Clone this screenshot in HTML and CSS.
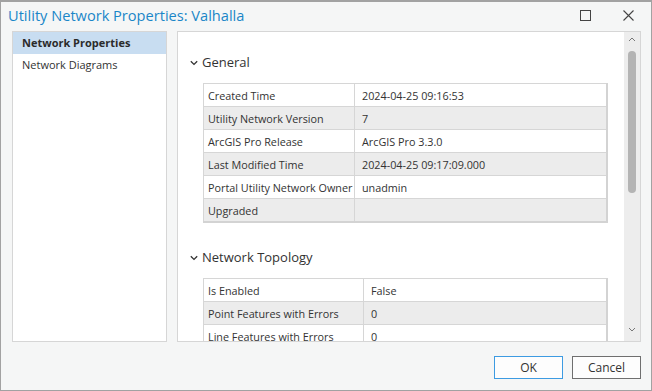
FILE: index.html
```html
<!DOCTYPE html>
<html>
<head>
<meta charset="utf-8">
<link rel="stylesheet" href="styles.css">
</head>
<body>
<div class="window">
  <div class="titlebar">
    <div class="title">Utility Network Properties: Valhalla</div>
    <div class="controls">
      <svg class="ctl" width="11" height="11" viewBox="0 0 11 11"><rect x="0.5" y="0.5" width="10" height="10" fill="none" stroke="#444" stroke-width="1"/></svg>
      <svg class="ctl close" width="11" height="11" viewBox="0 0 11 11"><path d="M0.5 0.5 L10.5 10.5 M10.5 0.5 L0.5 10.5" stroke="#444" stroke-width="1.1" fill="none"/></svg>
    </div>
  </div>
  <div class="main">
    <div class="nav">
      <div class="nav-item selected">Network Properties</div>
      <div class="nav-item">Network Diagrams</div>
    </div>
    <div class="pane">
      <div class="content">
        <div class="section-head">
          <svg width="8" height="6" viewBox="0 0 8 6"><path d="M0.8 1.2 L4 4.4 L7.2 1.2" stroke="#333" stroke-width="1.3" fill="none"/></svg>
          <span>General</span>
        </div>
        <table class="props t1">
          <tr><td class="k">Created Time</td><td class="v">2024-04-25 09:16:53</td></tr>
          <tr><td class="k">Utility Network Version</td><td class="v">7</td></tr>
          <tr><td class="k">ArcGIS Pro Release</td><td class="v">ArcGIS Pro 3.3.0</td></tr>
          <tr><td class="k">Last Modified Time</td><td class="v">2024-04-25 09:17:09.000</td></tr>
          <tr><td class="k">Portal Utility Network Owner</td><td class="v">unadmin</td></tr>
          <tr><td class="k">Upgraded</td><td class="v"></td></tr>
        </table>
        <div class="section-head second">
          <svg width="8" height="6" viewBox="0 0 8 6"><path d="M0.8 1.2 L4 4.4 L7.2 1.2" stroke="#333" stroke-width="1.3" fill="none"/></svg>
          <span>Network Topology</span>
        </div>
        <table class="props t2">
          <tr><td class="k">Is Enabled</td><td class="v">False</td></tr>
          <tr><td class="k">Point Features with Errors</td><td class="v">0</td></tr>
          <tr><td class="k">Line Features with Errors</td><td class="v">0</td></tr>
        </table>
      </div>
      <div class="scrollbar">
        <svg class="arrow up" width="8" height="5" viewBox="0 0 8 5"><path d="M1 4 L4 1 L7 4" stroke="#777" stroke-width="1" fill="none"/></svg>
        <div class="thumb"></div>
        <div class="spacer"></div>
        <svg class="arrow down" width="8" height="5" viewBox="0 0 8 5"><path d="M1 1 L4 4 L7 1" stroke="#777" stroke-width="1" fill="none"/></svg>
      </div>
    </div>
  </div>
  <div class="footer">
    <button class="btn ok">OK</button>
    <button class="btn cancel">Cancel</button>
  </div>
</div>
</body>
</html>
```
FILE: styles.css
```css
html, body {
  margin: 0;
  padding: 0;
  background: #ffffff;
}
body {
  font-family: "Open Sans", "Noto Sans", "Liberation Sans", sans-serif;
}
.window {
  width: 652px;
  height: 391px;
  box-sizing: border-box;
  border: 1px solid #a2a2a2;
  border-top-width: 2px;
  background: #f5f6f6;
  display: flex;
  flex-direction: column;
}
.titlebar {
  height: 29px;
  display: flex;
  align-items: center;
  padding-left: 7px;
}
.title {
  color: #1a86c8;
  font-size: 14.6px;
  flex: 1;
  margin-top: -3px;
}
.controls {
  display: flex;
  align-items: center;
  gap: 32px;
  padding-right: 17px;
  margin-top: -2px;
}
.ctl { display: block; }
.main {
  display: flex;
  gap: 10px;
  padding: 0 10px 0 11px;
  height: 311px;
}
.nav {
  width: 155px;
  box-sizing: border-box;
  border: 1px solid #d6d6d6;
  background: #ffffff;
}
.nav-item {
  height: 22px;
  line-height: 22px;
  padding-left: 9px;
  font-size: 11px;
  color: #333;
}
.nav-item.selected {
  background: #c8ddf1;
  font-weight: bold;
  color: #2b2b2b;
}
.pane {
  width: 464px;
  box-sizing: border-box;
  border: 1px solid #d6d6d6;
  background: #ffffff;
  display: flex;
  overflow: hidden;
}
.content {
  flex: 1;
  overflow: hidden;
  padding: 18px 0 0 12px;
}
.section-head {
  height: 24px;
  display: flex;
  align-items: center;
  gap: 4px;
  font-size: 13px;
  color: #333;
  margin-bottom: 9px;
}
.section-head.second {
  margin-top: 22px;
}
.section-head svg { display: block; margin-top: 1px; }
.props {
  margin-left: 13px;
  width: 405px;
  border-collapse: collapse;
  font-size: 10.8px;
  color: #333;
  border-right: 2px solid #d3d3d3;
  border-bottom: 2px solid #d3d3d3;
  table-layout: fixed;
}
.props td {
  height: 22px;
  padding: 0;
  border: 1px solid #d6d6d6;
  white-space: nowrap;
  overflow: hidden;
}
.props tr:nth-child(even) td { background: #ececec; }
.props td.k { padding-left: 4px; }
.props td.v { padding-left: 7px; }
.t1 td.k { width: 146px; }
.t2 td.k { width: 155px; }
.scrollbar {
  width: 16px;
  background: #ededed;
  display: flex;
  flex-direction: column;
  align-items: center;
}
.arrow { display: block; }
.arrow.up { margin-top: 5px; }
.thumb {
  width: 8px;
  height: 142px;
  margin-top: 9px;
  background: #b4b4b4;
  border-radius: 4px;
}
.spacer { flex: 1; }
.arrow.down { margin-bottom: 9px; }
.footer {
  display: flex;
  justify-content: flex-end;
  gap: 9px;
  padding: 14px 10px 0 0;
}
.btn {
  width: 69px;
  height: 23px;
  box-sizing: border-box;
  background: #fdfdfd;
  font-family: "Open Sans", "Noto Sans", "Liberation Sans", sans-serif;
  font-size: 12px;
  color: #333;
  padding: 0;
  margin: 0;
}
.btn.ok { border: 1px solid #3d9be2; }
.btn.cancel { border: 1px solid #6f6f6f; }
```
